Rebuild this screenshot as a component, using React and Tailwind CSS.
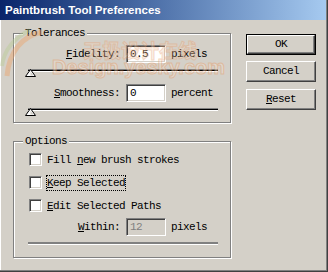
import React from 'react';

const mono = "font-['Liberation_Mono',monospace] text-[11px] tracking-[-0.6px] leading-[13px] text-black";

const Sunken = ({ value, disabled }) => (
    <div
        className={`w-[40px] h-[18px] border border-t-[#808080] border-l-[#808080] border-r-white border-b-white shadow-[inset_1px_1px_0_#404040,inset_-1px_-1px_0_#d4d0c8] flex items-center pl-[3px] ${
            disabled ? 'bg-[#d4d0c8] text-[#808080]' : 'bg-white'
        }`}
    >
        {value}
    </div>
);

const FieldRow = ({ label, value, unit, disabled }) => (
    <div className="flex items-center h-[18px]">
        <div className="w-[106px] text-right">{label}</div>
        <div className="ml-[6px]">
            <Sunken value={value} disabled={disabled} />
        </div>
        <div className="ml-[5px]">{unit}</div>
    </div>
);

const Slider = () => (
    <div className="relative ml-[14px] w-[190px] h-[9px]">
        <div className="h-[3px] border-t border-t-[#808080] bg-black border-b border-b-white" />
        <svg className="absolute -left-[3px] top-0" width="11" height="9" viewBox="0 0 11 9">
            <polygon points="5.5,0.5 10.5,7.5 0.5,7.5" fill="#fff" stroke="#000" strokeWidth="1" />
            <polygon points="5.5,2.5 8.5,6.5 5.5,6.5" fill="#d4d0c8" />
        </svg>
    </div>
);

const Group = ({ title, className, children }) => (
    <div className={`relative border border-[#808080] shadow-[inset_1px_1px_0_#fff,1px_1px_0_#fff] ${className}`}>
        <span className="absolute -top-[7px] left-[9px] px-[2px] bg-[#d4d0c8]">{title}</span>
        {children}
    </div>
);

const CheckRow = ({ children, focused }) => (
    <div className="flex items-center h-[13px]">
        <div className="w-[13px] h-[13px] bg-white border border-t-[#808080] border-l-[#808080] border-r-white border-b-white shadow-[inset_1px_1px_0_#404040,inset_-1px_-1px_0_#d4d0c8]" />
        <span className={`ml-[4px] px-0 border leading-[14px] ${focused ? 'border-dotted border-black' : 'border-transparent'}`}>
            {children}
        </span>
    </div>
);

const Button = ({ children, isDefault }) => {
    const inner = (
        <div className="w-full h-full flex items-center justify-center border border-t-white border-l-white border-r-[#404040] border-b-[#404040] shadow-[inset_-1px_-1px_0_#808080]">
            {children}
        </div>
    );
    return isDefault ? (
        <div className="w-[70px] h-[21px] border border-black">{inner}</div>
    ) : (
        <div className="w-[70px] h-[21px]">{inner}</div>
    );
};

export default function App() {
    return (
        <div className={`relative w-[328px] h-[272px] bg-[#d4d0c8] overflow-hidden shadow-[inset_-1px_-1px_0_#404040,inset_-2px_-2px_0_#808080,inset_1px_0_0_#fff] ${mono}`}>
            <div className="h-[20px] mr-[2px] flex items-center pl-[5px] bg-gradient-to-r from-[#0a246a] to-[#a6caf0]">
                <span className="font-['Liberation_Sans',sans-serif] font-bold text-[11.5px] tracking-normal text-white">
                    Paintbrush Tool Preferences
                </span>
            </div>

            <div className="flex pl-[13px] pt-[13px]">
                <div className="w-[218px]">
                    <Group title="Tolerances" className="h-[90px]">
                        <div className="pt-[11px]">
                            <FieldRow label={<><u>F</u>idelity:</>} value="0.5" unit="pixels" />
                            <div className="mt-[6px]">
                                <Slider />
                            </div>
                            <div className="mt-[6px]">
                                <FieldRow label={<><u>S</u>moothness:</>} value="0" unit="percent" />
                            </div>
                            <div className="mt-[6px]">
                                <Slider />
                            </div>
                        </div>
                    </Group>

                    <Group title="Options" className="mt-[18px] h-[117px]">
                        <div className="pt-[11px] pl-[15px] flex flex-col gap-[10px]">
                            <CheckRow>Fill <u>n</u>ew brush strokes</CheckRow>
                            <CheckRow focused><u>K</u>eep Selected</CheckRow>
                            <CheckRow><u>E</u>dit Selected Paths</CheckRow>
                        </div>
                        <div className="mt-[6px]">
                            <FieldRow label={<><u>W</u>ithin:</>} value="12" unit="pixels" disabled />
                        </div>
                        <div className="mt-[6px] ml-[14px] w-[190px] h-[3px] bg-[#808080] border-b border-b-white" />
                    </Group>
                </div>

                <div className="ml-[15px] pt-[1px] flex flex-col">
                    <Button isDefault>OK</Button>
                    <div className="mt-[6px]">
                        <Button>Cancel</Button>
                    </div>
                    <div className="mt-[7px]">
                        <Button><span><u>R</u>eset</span></Button>
                    </div>
                </div>
            </div>

            {/* faint site watermark laid over the dialog */}
            <div className="pointer-events-none absolute inset-0 opacity-40">
                <svg className="absolute left-0 top-[24px]" width="60" height="60" viewBox="0 0 60 60">
                    <path d="M42 8 C22 12 9 28 7 52" fill="none" stroke="#f0a060" strokeWidth="5" />
                    <path d="M30 6 C14 14 4 26 2 42" fill="none" stroke="#b8cc90" strokeWidth="4" />
                </svg>
                <span className="absolute left-[83px] top-[40px] font-['Noto_Sans_CJK_SC',sans-serif] font-bold text-[19px] tracking-normal leading-[20px] text-[#f2dcc8] [-webkit-text-stroke:1px_#e8a070]">
                    天极设计在线
                </span>
                <span className="absolute left-[52px] top-[56px] font-['Liberation_Sans',sans-serif] font-bold text-[20px] tracking-normal leading-[22px] text-[#f2e2d4] [-webkit-text-stroke:1px_#e89860]">
                    Design.yesky.com
                </span>
            </div>
        </div>
    );
}
